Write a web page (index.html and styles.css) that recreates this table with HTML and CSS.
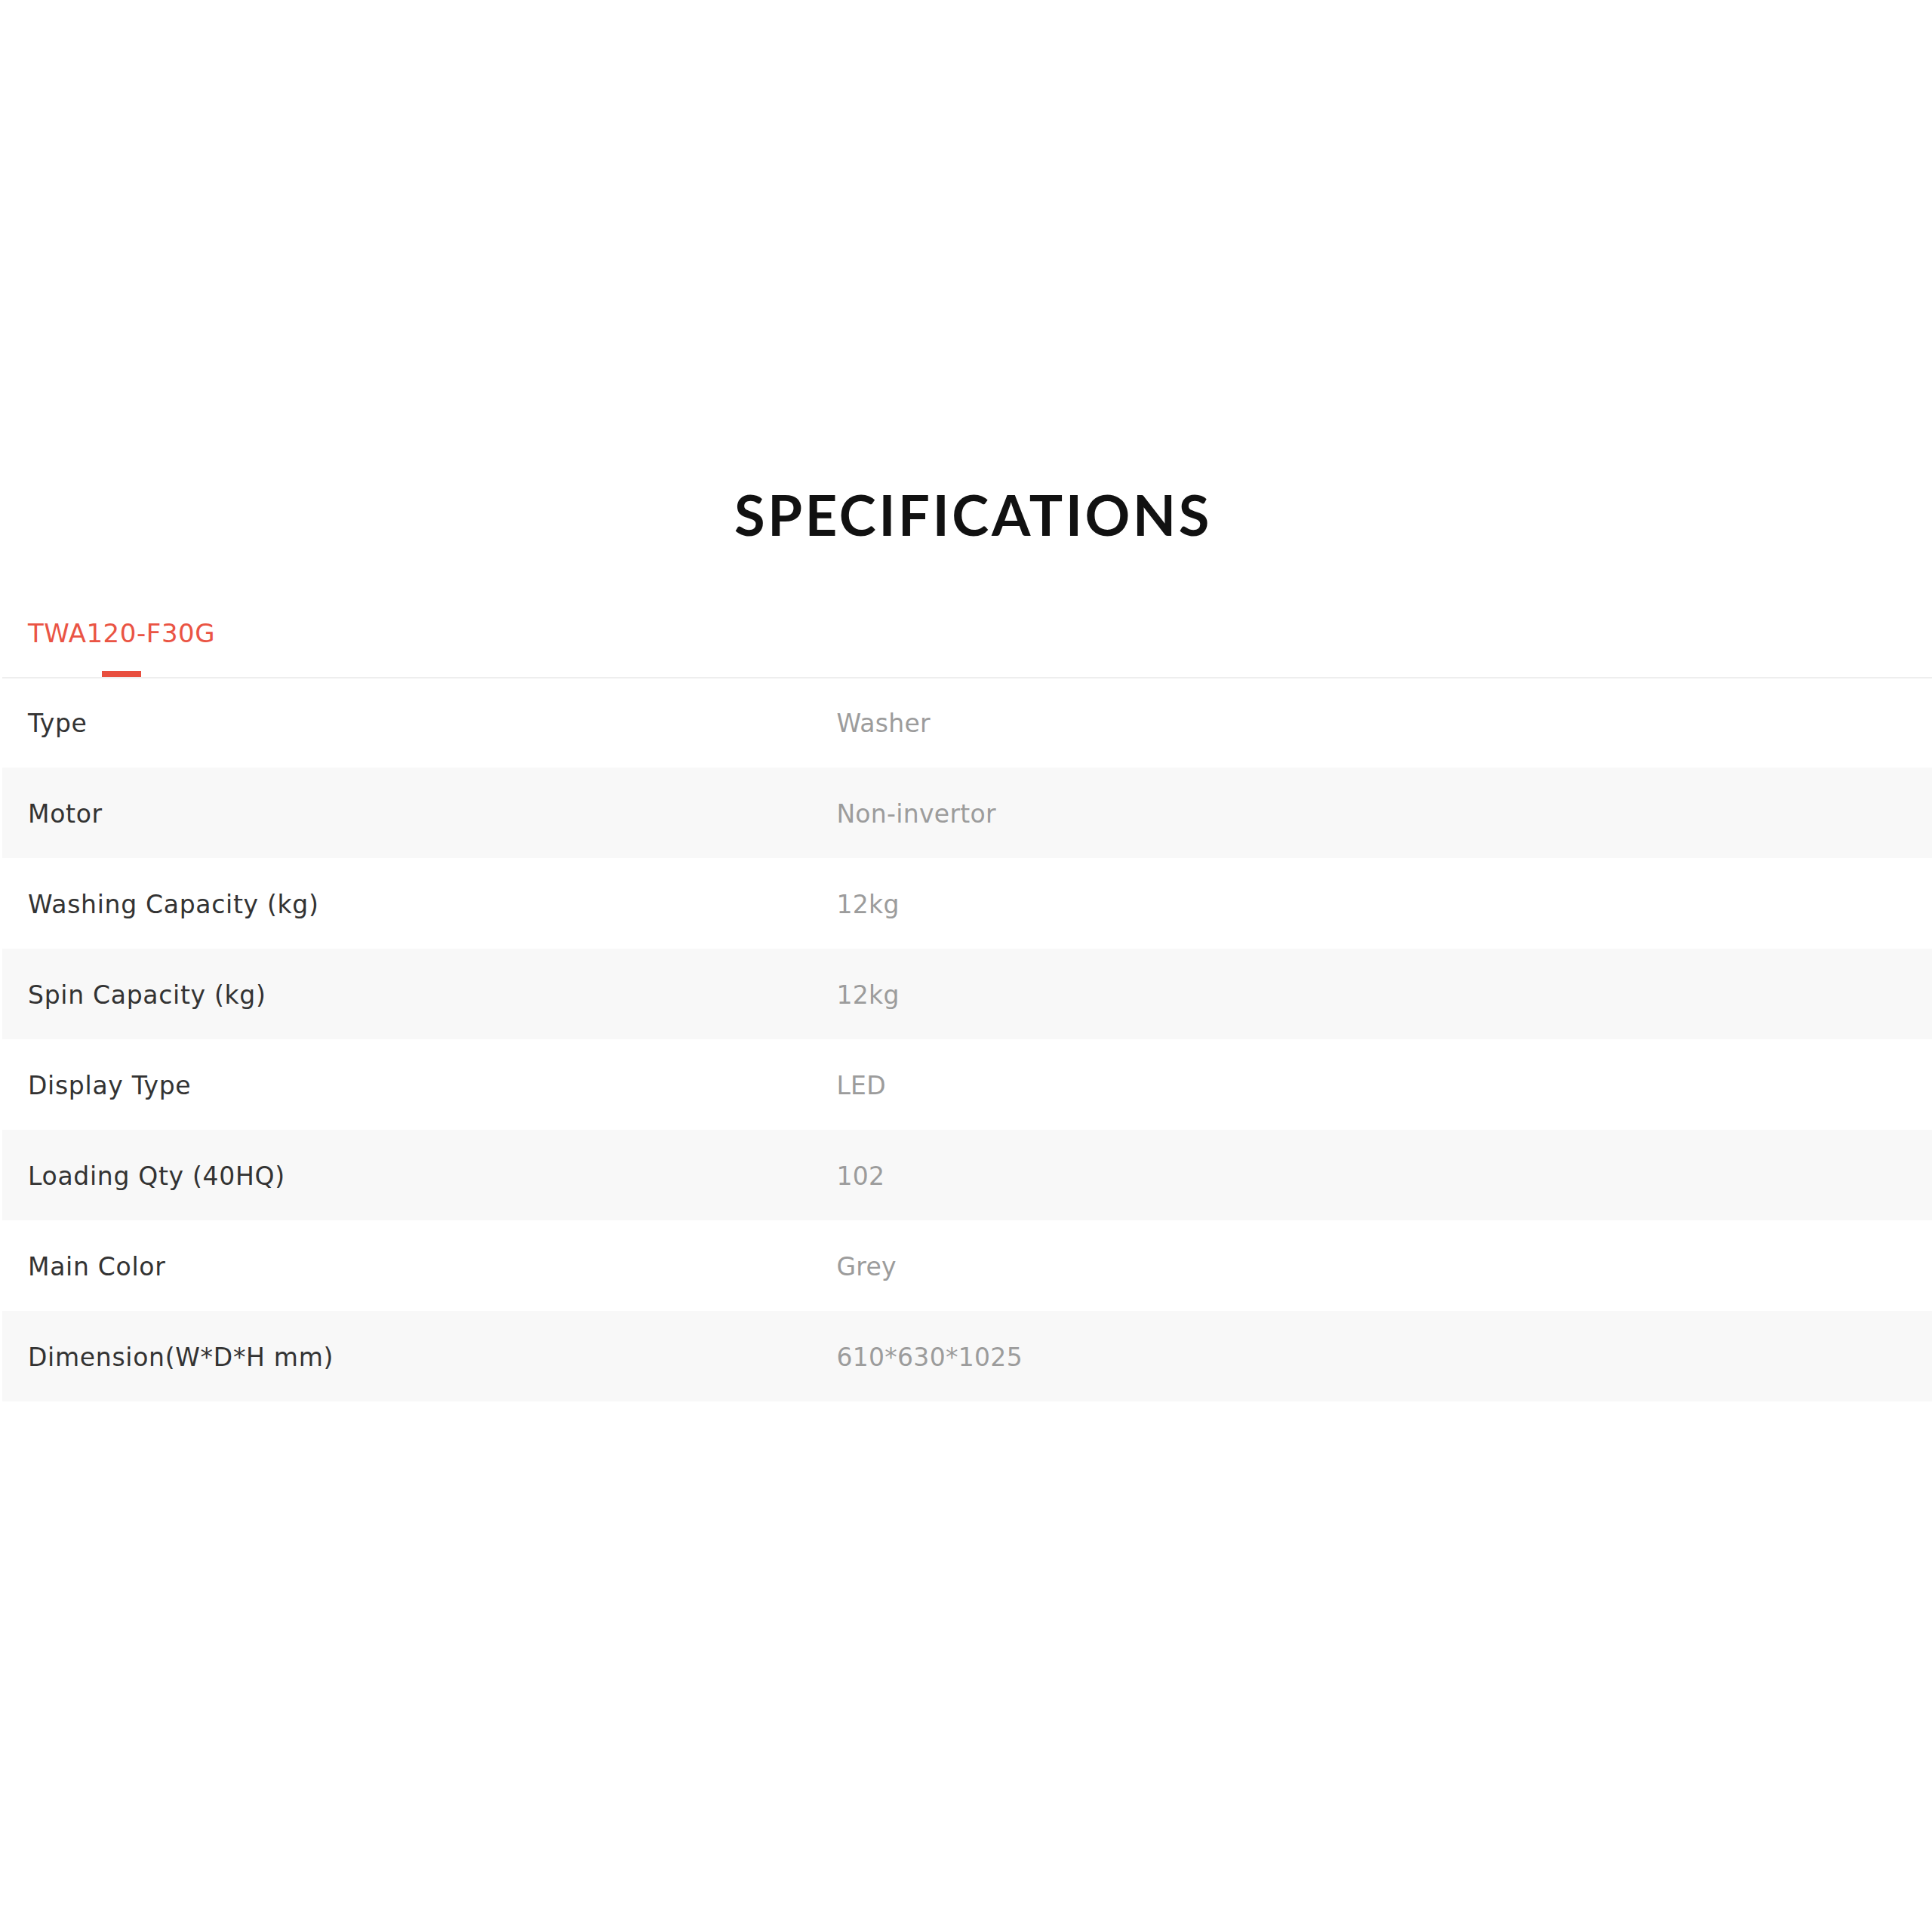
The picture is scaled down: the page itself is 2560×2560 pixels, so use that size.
FILE: index.html
```html
<!DOCTYPE html>
<html lang="en">
<head>
<meta charset="utf-8">
<title>Specifications</title>
<link rel="stylesheet" href="styles.css">
</head>
<body>
<section class="specs">
  <h2 class="specs-title">SPECIFICATIONS</h2>
  <div class="tabs">
    <div class="tab active">TWA120-F30G</div>
  </div>
  <div class="spec-table">
    <div class="spec-row"><div class="spec-label">Type</div><div class="spec-value">Washer</div></div>
    <div class="spec-row"><div class="spec-label">Motor</div><div class="spec-value">Non-invertor</div></div>
    <div class="spec-row"><div class="spec-label">Washing Capacity (kg)</div><div class="spec-value">12kg</div></div>
    <div class="spec-row"><div class="spec-label">Spin Capacity (kg)</div><div class="spec-value">12kg</div></div>
    <div class="spec-row"><div class="spec-label">Display Type</div><div class="spec-value">LED</div></div>
    <div class="spec-row"><div class="spec-label">Loading Qty (40HQ)</div><div class="spec-value">102</div></div>
    <div class="spec-row"><div class="spec-label">Main Color</div><div class="spec-value">Grey</div></div>
    <div class="spec-row"><div class="spec-label">Dimension(W*D*H mm)</div><div class="spec-value">610*630*1025</div></div>
  </div>
</section>
</body>
</html>
```

FILE: styles.css
```css
html, body {
  margin: 0;
  padding: 0;
  background: #ffffff;
}

body {
  font-family: "DejaVu Sans", "Liberation Sans", sans-serif;
  color: #333333;
}

.specs {
  margin-left: 3px;
  padding-top: 638px;
}

.specs-title {
  margin: 0 0 92px 0;
  padding-left: 16px;
  font-family: "Lato", "Liberation Sans", sans-serif;
  font-weight: 700;
  font-size: 74px;
  line-height: 1.2;
  letter-spacing: 3.7px;
  text-align: center;
  color: #111111;
}

.tabs {
  display: flex;
  padding-left: 34px;
  border-bottom: 2px solid #eeeeee;
  margin-bottom: -2px;
  position: relative;
  z-index: 1;
}

.tab {
  position: relative;
  font-size: 34px;
  line-height: 40px;
  letter-spacing: 0.55px;
  padding-bottom: 38px;
  color: #333333;
}

.tab.active {
  color: #ea5444;
}

.tab.active::after {
  content: "";
  position: absolute;
  left: 50%;
  bottom: 0;
  width: 52px;
  height: 8px;
  margin-left: -26px;
  background: #e84f3f;
}

.spec-table {
  display: flex;
  flex-direction: column;
}

.spec-row {
  display: grid;
  grid-template-columns: 41.9% 58.1%;
  align-items: center;
  height: 120px;
}

.spec-row:nth-child(even) {
  background: #f8f8f8;
}

.spec-label,
.spec-value {
  padding: 4px 34px 0;
  font-size: 33px;
  line-height: 1.2;
}

.spec-label {
  color: #333333;
  letter-spacing: 0.7px;
}

.spec-value {
  color: #9c9c9c;
  letter-spacing: 0.3px;
}
```
